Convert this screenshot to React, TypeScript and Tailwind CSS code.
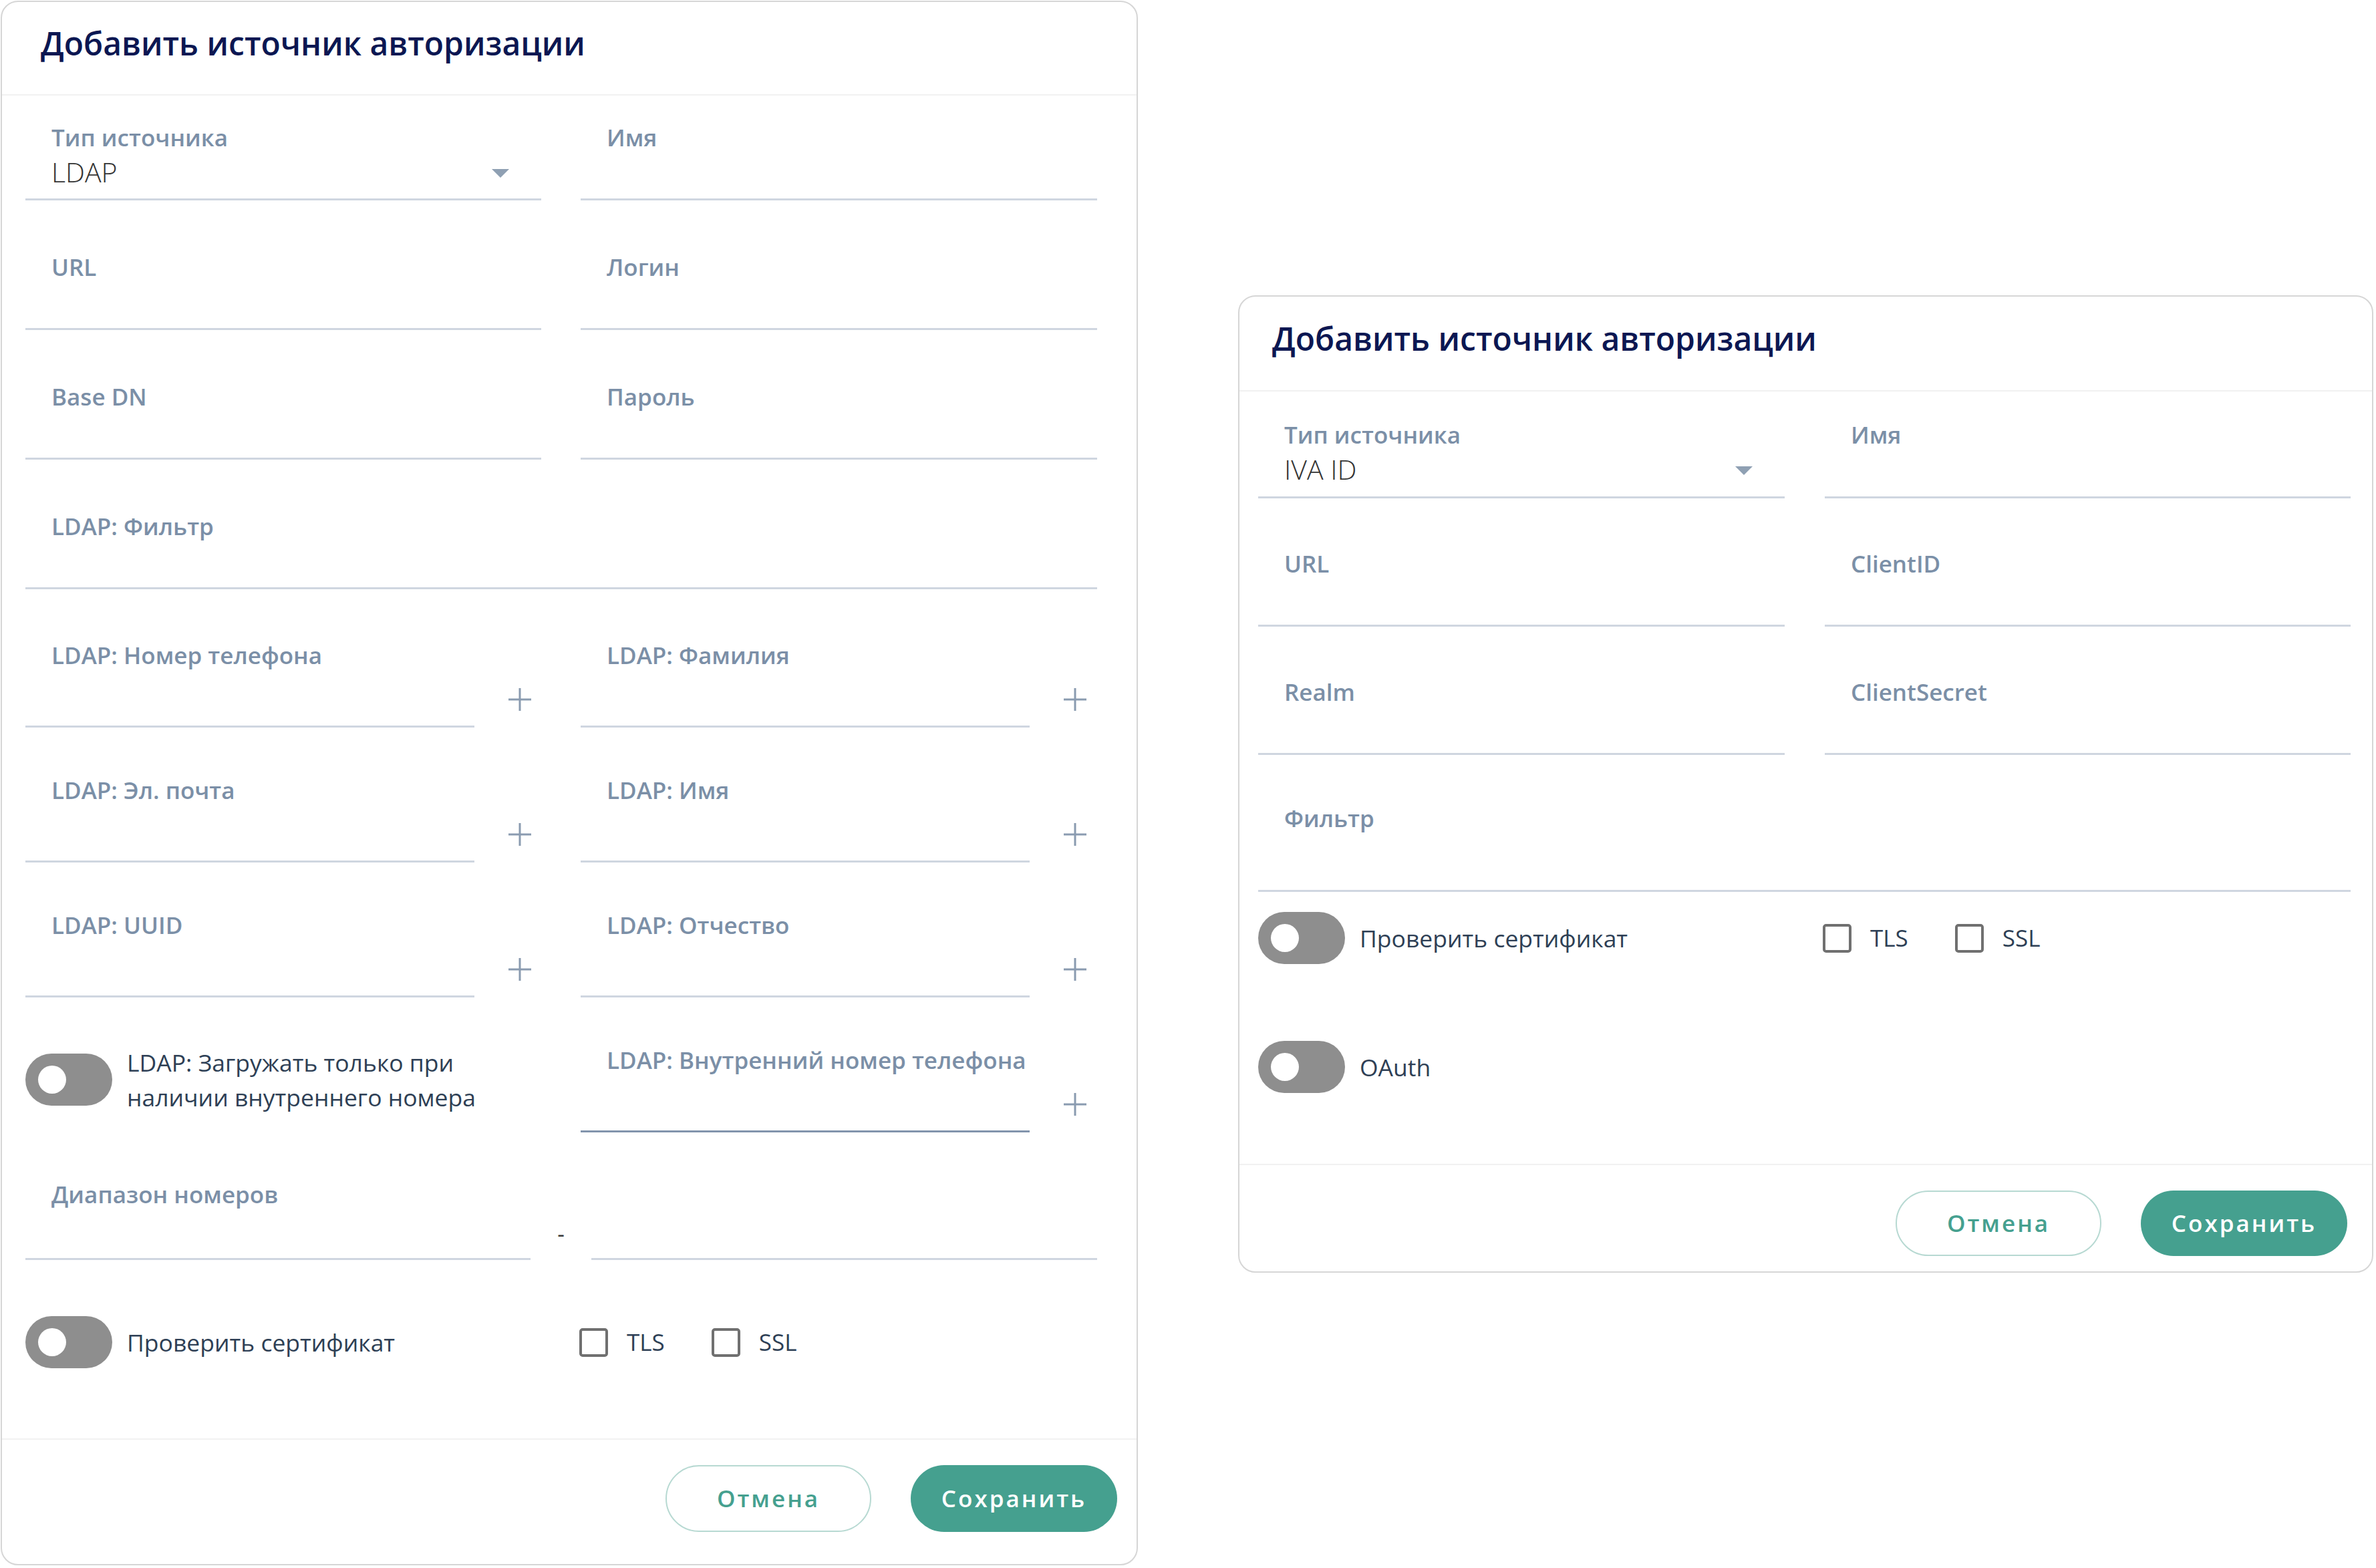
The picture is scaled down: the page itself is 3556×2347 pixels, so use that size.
import React from "react";

/* small drawings */
const Caret = () => (
  <svg width="26" height="13" viewBox="0 0 26 13">
    <path d="M0 0h26L13 13z" fill="#8fa0b3" />
  </svg>
);

const Plus = () => (
  <svg width="36" height="36" viewBox="0 0 36 36" stroke="#8a9bb0" strokeWidth="3">
    <path d="M18 1v34M1 18h34" />
  </svg>
);

const Toggle = () => (
  <div className="flex h-[78px] w-[130px] shrink-0 items-center rounded-full bg-[#8e8e8e] pl-[19px]">
    <div className="h-[42px] w-[42px] rounded-full bg-white" />
  </div>
);

const Check = ({ label }: { label: string }) => (
  <div className="flex items-center gap-[28px]">
    <div className="h-[43px] w-[43px] rounded-[5px] border-4 border-[#707070]" />
    <span className="text-[35px] leading-[46px] text-[#2e3f55]">{label}</span>
  </div>
);

type FieldProps = {
  label: string;
  value?: string;
  h?: string;
  caret?: boolean;
  focused?: boolean;
  className?: string;
};

const Field = ({ label, value, h = "h-[71px]", caret, focused, className = "" }: FieldProps) => (
  <div className={"flex flex-col " + className}>
    <span className="whitespace-nowrap pl-[39px] text-[35px] font-semibold leading-[46px] text-[#7b8fa7]">
      {label}
    </span>
    <div
      className={
        h +
        " flex items-start justify-between border-b-[3px] pl-[39px] pr-[48px] " +
        (focused ? "border-[#8294ac]" : "border-[#cfd6e0]")
      }
    >
      {value && <span className="pt-[5px] text-[41px] font-light leading-[46px] text-[#333333]">{value}</span>}
      {caret && (
        <span className="pt-[24px]">
          <Caret />
        </span>
      )}
    </div>
  </div>
);

/* field with plus button on its right */
const PlusField = ({ label, focused }: { label: string; focused?: boolean }) => (
  <div className="flex items-end">
    <Field label={label} h="h-[85px]" focused={focused} className="w-[672px]" />
    <div className="flex w-[100px] justify-end pb-[24px] pr-[14px]">
      <Plus />
    </div>
  </div>
);

const ToggleText = ({ children }: { children: React.ReactNode }) => (
  <div className="flex items-center gap-[22px]">
    <Toggle />
    <span className="text-[35.5px] leading-[52px] text-[#2e3f55]">{children}</span>
  </div>
);

const Footer = ({ pr, pb, bh }: { pr: string; pb: string; bh: string }) => (
  <div className={"flex justify-end gap-[59px] border-t-2 border-[#f1f1f1] pt-[38px] " + pr + " " + pb}>
    <button
      className={bh + " w-[308px] rounded-full border-2 border-[#b7d9d2] text-[35px] font-semibold tracking-[3px] text-[#45a08f]"}
    >
      Отмена
    </button>
    <button
      className={bh + " w-[309px] rounded-full bg-[#45a08f] text-[35px] font-semibold tracking-[3px] text-white"}
    >
      Сохранить
    </button>
  </div>
);

const Header = ({ pl, pt, h }: { pl: string; pt: string; h: string }) => (
  <div className={"border-b-2 border-[#f1f1f1] " + pl + " " + pt + " " + h}>
    <h2 className="text-[48px] font-semibold leading-[62px] text-[#0c1752]">
      Добавить источник авторизации
    </h2>
  </div>
);

const LdapCard = () => (
  <div className="ml-px mt-px flex h-[2342px] w-[1702px] shrink-0 flex-col rounded-[26px] border-2 border-[#d6d6d6] bg-white">
    <Header pl="pl-[58px]" pt="pt-[31px]" h="h-[140px]" />
    <div className="flex-1 pl-[35px] pt-[40px]">
      <div className="grid grid-cols-[772px_773px] gap-x-[59px] gap-y-[77px]">
        <Field label="Тип источника" value="LDAP" caret />
        <Field label="Имя" />
        <Field label="URL" />
        <Field label="Логин" />
        <Field label="Base DN" />
        <Field label="Пароль" />
        <Field label="LDAP: Фильтр" className="col-span-2" />
      </div>
      <div className="mt-[76px] grid grid-cols-[772px_773px] gap-x-[59px] gap-y-[71px]">
        <PlusField label="LDAP: Номер телефона" />
        <PlusField label="LDAP: Фамилия" />
        <PlusField label="LDAP: Эл. почта" />
        <PlusField label="LDAP: Имя" />
        <PlusField label="LDAP: UUID" />
        <PlusField label="LDAP: Отчество" />
        <div className="self-start">
          <ToggleText>
            LDAP: Загружать только при
            <br />
            наличии внутреннего номера
          </ToggleText>
        </div>
        <PlusField label="LDAP: Внутренний номер телефона" focused />
      </div>
      <div className="mt-[70px] flex w-[1604px] items-end">
        <Field label="Диапазон номеров" h="h-[75px]" className="w-[756px]" />
        <div className="flex w-[91px] justify-center pb-[16px] text-[33px] leading-[46px] text-[#3a3a3a]">-</div>
        <Field label="" h="h-[75px]" className="w-[757px]" />
      </div>
      <div className="mt-[84px] grid grid-cols-[772px_773px] gap-x-[59px]">
        <ToggleText>Проверить сертификат</ToggleText>
        <div className="-ml-[2px] flex items-center gap-[70px]">
          <Check label="TLS" />
          <Check label="SSL" />
        </div>
      </div>
    </div>
    <Footer pr="pr-[29px]" pb="pb-[48px]" bh="h-[100px]" />
  </div>
);

const IvaCard = () => (
  <div className="ml-[150px] mt-[442px] flex h-[1463px] w-[1699px] shrink-0 flex-col rounded-[26px] border-2 border-[#d6d6d6] bg-white">
    <Header pl="pl-[49px]" pt="pt-[32px]" h="h-[142px]" />
    <div className="flex-1 pl-[28px] pt-[42px]">
      <div className="grid grid-cols-[788px_787px] gap-x-[60px]">
        <Field label="Тип источника" value="IVA ID" caret h="h-[72px]" />
        <Field label="Имя" h="h-[72px]" />
      </div>
      <div className="mt-[75px] grid grid-cols-[788px_787px] gap-x-[60px] gap-y-[75px]">
        <Field label="URL" />
        <Field label="ClientID" />
        <Field label="Realm" />
        <Field label="ClientSecret" />
      </div>
      <Field label="Фильтр" h="h-[87px]" className="mt-[72px] w-[1635px]" />
      <div className="mt-[30px] grid grid-cols-[788px_787px] gap-x-[60px]">
        <ToggleText>Проверить сертификат</ToggleText>
        <div className="-ml-[3px] flex items-center gap-[70px]">
          <Check label="TLS" />
          <Check label="SSL" />
        </div>
      </div>
      <div className="mt-[115px]">
        <ToggleText>OAuth</ToggleText>
      </div>
    </div>
    <Footer pr="pr-[37px]" pb="pb-[23px]" bh="h-[98px]" />
  </div>
);

export default function App() {
  return (
    <div className="flex h-[2347px] w-[3556px] items-start bg-white font-['Open_Sans','Noto_Sans',sans-serif]">
      <LdapCard />
      <IvaCard />
    </div>
  );
}
